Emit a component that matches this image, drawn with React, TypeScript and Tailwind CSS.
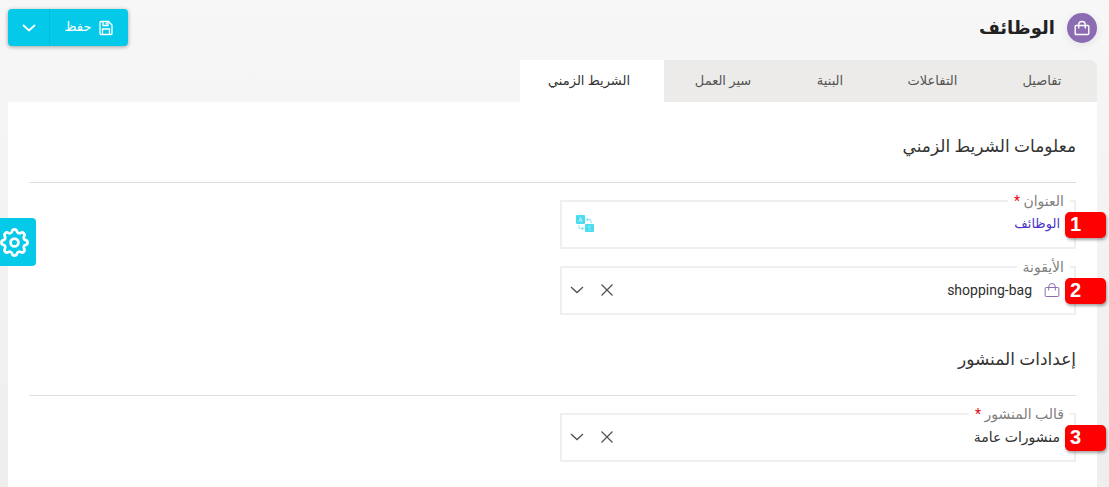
import { useState } from "react";
import type { ReactNode } from "react";
import clsx from "clsx";

interface Tab {
  id: string;
  label: string;
  width: string;
}

const tabs: Tab[] = [
  { id: "details", label: "تفاصيل", width: "w-[104px]" },
  { id: "interactions", label: "التفاعلات", width: "w-[115px]" },
  { id: "structure", label: "البنية", width: "w-[90px]" },
  { id: "workflow", label: "سير العمل", width: "w-[124px]" },
  { id: "timeline", label: "الشريط الزمني", width: "w-[144px]" },
];

function BagIcon({ className }: { className?: string }) {
  return (
    <svg viewBox="0 0 16 16" fill="none" stroke="currentColor" className={className} aria-hidden="true">
      <rect x="1.2" y="5.5" width="13.6" height="9" rx="1" />
      <path d="M4.7 8.5V4.7a3.3 3.2 0 0 1 6.6 0v3.8" />
    </svg>
  );
}

function SaveIcon() {
  return (
    <svg viewBox="0 0 14 16" fill="none" stroke="currentColor" strokeWidth="1.3" className="h-4 w-3.5" aria-hidden="true">
      <path d="M2 1.5h7.5L13 5v8.5a1 1 0 0 1-1 1H2a1 1 0 0 1-1-1v-11a1 1 0 0 1 1-1z" />
      <path d="M4 1.5v4h5v-4M7.3 2.8v1.5M3.5 14.5V9h7v5.5" />
    </svg>
  );
}

function GearIcon() {
  return (
    <svg viewBox="2 2 20 20" fill="none" stroke="currentColor" strokeWidth="1.9" className="size-[29px]" aria-hidden="true">
      <path d="M10.325 4.317c.426-1.756 2.924-1.756 3.35 0a1.724 1.724 0 0 0 2.573 1.066c1.543-.94 3.31.826 2.37 2.37a1.724 1.724 0 0 0 1.065 2.572c1.756.426 1.756 2.924 0 3.35a1.724 1.724 0 0 0-1.066 2.573c.94 1.543-.826 3.31-2.37 2.37a1.724 1.724 0 0 0-2.572 1.065c-.426 1.756-2.924 1.756-3.35 0a1.724 1.724 0 0 0-2.573-1.066c-1.543.94-3.31-.826-2.37-2.37a1.724 1.724 0 0 0-1.065-2.572c-1.756-.426-1.756-2.924 0-3.35a1.724 1.724 0 0 0 1.066-2.573c-.94-1.543.826-3.31 2.37-2.37 1 .608 2.296.07 2.572-1.065z" />
      <circle cx="12" cy="12" r="2.7" />
    </svg>
  );
}

function TranslateIcon() {
  return (
    <svg viewBox="0 0 18 18" fill="none" className="size-[18px]" aria-hidden="true">
      <rect width="9" height="9" rx="1" fill="#4adcf0" />
      <rect x="9" y="9" width="9" height="8" rx="1" fill="#4adcf0" />
      <path d="M3 6.8 4.5 2.5 6 6.8M3.5 5.5h2" stroke="#c5f5fb" strokeWidth=".9" />
      <path d="M14.8 11.2h-2v1.7h1.6M12.6 15h2.6" stroke="#a5eef8" strokeWidth=".8" />
      <path d="M10.5 4.5H14a1 1 0 0 1 1 1V8M12 3l-1.5 1.5L12 6M7.5 13.5H4a1 1 0 0 1-1-1V10M6 12l1.5 1.5L6 15" stroke="#7be6f5" />
    </svg>
  );
}

function ChevronIcon({ className }: { className?: string }) {
  return (
    <svg viewBox="0 0 14 8" fill="none" stroke="currentColor" className={clsx("h-2 w-3.5", className)} aria-hidden="true">
      <path d="m1 1 6 5.5L13 1" />
    </svg>
  );
}

interface FieldProps {
  id: string;
  label: string;
  step: number;
  required?: boolean;
  children: ReactNode;
}

function Field({ id, label, step, required, children }: FieldProps) {
  return (
    <div className="relative">
      <fieldset className="min-w-0 border-2 border-[#efefef] pb-2.5 pl-2 pr-3.5">
        <legend className="-mr-2.5 px-1.5 leading-5 text-[#808080]">
          <label htmlFor={id}>
            {label}
            {required && <span className="text-red-600"> *</span>}
          </label>
        </legend>
        <div className="flex h-[26px] items-center">{children}</div>
      </fieldset>
      <span
        dir="ltr"
        className="absolute -right-[30px] top-[21px] h-[26px] w-[41px] rounded-[5px] bg-[#fe0000] pl-[5px] text-left font-['Liberation_Sans',sans-serif] text-xl leading-6 font-bold text-white shadow-[1px_2px_3px_rgba(0,0,0,0.35)]"
      >
        {step}
      </span>
    </div>
  );
}

interface SelectBoxProps {
  id: string;
  options: string[];
  icon?: ReactNode;
}

function SelectBox({ id, options, icon }: SelectBoxProps) {
  const [value, setValue] = useState(options[0]);

  return (
    <>
      {icon}
      <select
        id={id}
        value={value}
        onChange={(e) => setValue(e.target.value)}
        className="h-6 min-w-0 flex-1 appearance-none bg-transparent text-[#2f2f2f] outline-none"
      >
        <option value="" />
        {options.map((option) => (
          <option key={option} value={option}>
            {option}
          </option>
        ))}
      </select>
      <button type="button" aria-label="مسح" onClick={() => setValue("")} className="px-2 text-[#505050]">
        <svg viewBox="0 0 14 14" fill="none" stroke="currentColor" strokeWidth="1.2" className="size-3.5">
          <path d="m1.5 1.5 11 11M12.5 1.5l-11 11" />
        </svg>
      </button>
      <ChevronIcon className="mr-2 stroke-[1.3] text-[#505050]" />
    </>
  );
}

function Section({ title, children }: { title: string; children: ReactNode }) {
  return (
    <section>
      <h2 className="border-b border-[#dedede] pb-6 text-[17px] leading-6 text-[#333]">{title}</h2>
      <div className="grid grid-cols-2 gap-3.5 pt-2">
        <div className="flex flex-col gap-2">{children}</div>
      </div>
    </section>
  );
}

export default function App() {
  const [activeTab, setActiveTab] = useState("timeline");
  const [title, setTitle] = useState("الوظائف");

  return (
    <div
      dir="rtl"
      className="flex min-h-screen flex-col bg-linear-to-b from-[#f7f7f7] to-[#eeeeee] pl-2 pr-3 pt-[9px] font-[Roboto,'DejaVu_Sans',sans-serif] text-sm"
    >
      <header className="mb-3.5 flex items-center justify-between">
        <div className="flex items-center gap-3">
          <span className="flex size-[30px] items-center justify-center rounded-full bg-[#8b6cb3] text-white shadow-[0_2px_8px_rgba(0,0,0,0.08)]">
            <BagIcon className="size-4 stroke-[1.4]" />
          </span>
          <h1 className="text-lg leading-7 font-bold text-[#212121]">الوظائف</h1>
        </div>
        <div className="flex h-[37px] overflow-hidden rounded-[4px] bg-[#05c9e8] text-white shadow-[0_1px_4px_rgba(0,0,0,0.35)]">
          <button type="button" className="flex w-[78px] items-center justify-center gap-2 text-[13px]">
            <SaveIcon />
            حفظ
          </button>
          <button type="button" aria-label="خيارات الحفظ" className="flex w-[42px] items-center justify-center border-r border-[#04bcd9]">
            <ChevronIcon className="stroke-[1.8]" />
          </button>
        </div>
      </header>

      <nav className="flex w-fit overflow-hidden rounded-tr-lg bg-[#ecebe9]" role="tablist">
        {tabs.map((tab) => (
          <button
            key={tab.id}
            type="button"
            role="tab"
            aria-selected={activeTab === tab.id}
            onClick={() => setActiveTab(tab.id)}
            className={clsx(
              "h-[42px] pr-1.5 text-center text-[13px] whitespace-nowrap",
              tab.width,
              activeTab === tab.id ? "bg-white text-[#333]" : "text-[#555]"
            )}
          >
            {tab.label}
          </button>
        ))}
      </nav>

      <main className="flex flex-1 flex-col gap-8 bg-white px-[21px] pb-6 pt-8">
        <Section title="معلومات الشريط الزمني">
          <Field id="title" label="العنوان" step={1} required>
            <input
              id="title"
              value={title}
              onChange={(e) => setTitle(e.target.value)}
              className="min-w-0 flex-1 bg-transparent text-[13px] text-[#4a35c8] outline-none"
            />
            <button type="button" aria-label="ترجمة" className="ml-1.5">
              <TranslateIcon />
            </button>
          </Field>
          <Field id="icon" label="الأيقونة" step={2}>
            <SelectBox
              id="icon"
              options={["shopping-bag"]}
              icon={<BagIcon className="ml-3 size-4 text-[#8b6cb3]" />}
            />
          </Field>
        </Section>

        <Section title="إعدادات المنشور">
          <Field id="template" label="قالب المنشور" step={3} required>
            <SelectBox id="template" options={["منشورات عامة"]} />
          </Field>
        </Section>
      </main>

      <button
        type="button"
        aria-label="الإعدادات"
        className="fixed left-0 top-[218px] flex h-12 w-9 items-center justify-end rounded-r-[4px] bg-[#05c9e8] text-white"
      >
        <GearIcon />
      </button>
    </div>
  );
}
